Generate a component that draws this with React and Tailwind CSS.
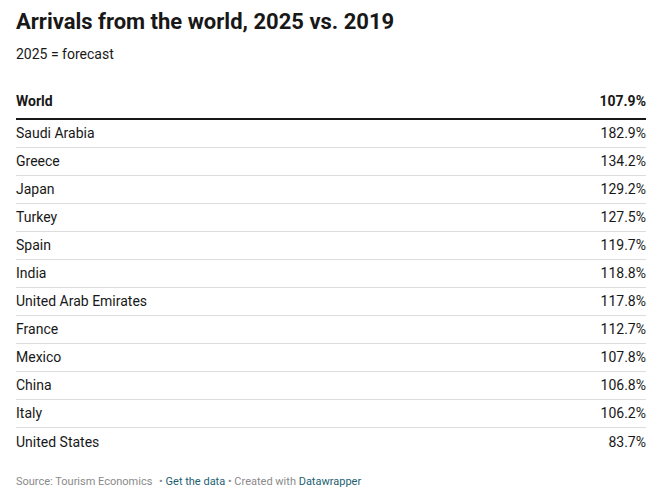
import React from "react";

const rows = [
  ["Saudi Arabia", "182.9%"],
  ["Greece", "134.2%"],
  ["Japan", "129.2%"],
  ["Turkey", "127.5%"],
  ["Spain", "119.7%"],
  ["India", "118.8%"],
  ["United Arab Emirates", "117.8%"],
  ["France", "112.7%"],
  ["Mexico", "107.8%"],
  ["China", "106.8%"],
  ["Italy", "106.2%"],
  ["United States", "83.7%"],
];

export default function App() {
  return (
    <div className="w-[669px] h-[498px] bg-white text-[#181818] px-4 pt-[8px]" style={{ fontFamily: "Roboto, 'Liberation Sans', sans-serif" }}>
      <div className="w-[630px]">
        <h1 className="text-[22px] leading-[28px] font-bold text-[#181818]">Arrivals from the world, 2025 vs. 2019</h1>
        <p className="text-[14px] leading-[18px] mt-[9px] text-[#181818]">2025 = forecast</p>
        <div className="mt-[22px] flex justify-between items-center h-[35px] border-b-2 border-[#181818] text-[14px] font-bold">
          <span>World</span>
          <span>107.9%</span>
        </div>
        {rows.map(([n, v], i) => (
          <div key={n} className={`flex justify-between items-center h-[28px] text-[14px] ${i < rows.length - 1 ? "border-b border-[#dddddd]" : ""}`}>
            <span>{n}</span>
            <span>{v}</span>
          </div>
        ))}
        <div className="mt-[18px] text-[11px] text-[#8a8a8a]">
          Source: Tourism Economics <span className="ml-1">•</span> <span className="text-[#1d5f73]">Get the data</span> • Created with <span className="text-[#1d5f73]">Datawrapper</span>
        </div>
      </div>
    </div>
  );
}
